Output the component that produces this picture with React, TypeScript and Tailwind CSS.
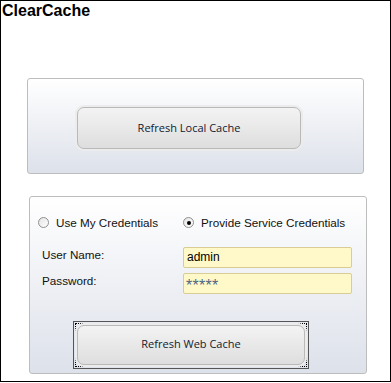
import React from 'react'

const sans = { fontFamily: '"Liberation Sans", Arial, sans-serif' }
const ui = { fontFamily: '"Open Sans", "Noto Sans", sans-serif' }

function Radio({ checked, label }: { checked?: boolean; label: string }) {
  return (
    <label className="flex items-center gap-[7px] text-[11.7px] text-[#111]" style={sans}>
      <span className="flex h-[11px] w-[11px] items-center justify-center rounded-full border border-[#8f8f8f] bg-gradient-to-br from-[#e4e4e4] to-white">
        {checked && <span className="h-[4px] w-[4px] rounded-full bg-black" />}
      </span>
      {label}
    </label>
  )
}

function CacheButton({ label }: { label: string }) {
  return (
    <div className="flex h-full w-full items-center justify-center rounded-[7px] border border-[#b9b9b9] bg-gradient-to-b from-[#f3f3f3] to-[#dedede] text-[11px] text-[#0f1a33] shadow-[0_0_0_2px_#ececec]" style={ui}>
      {label}
    </div>
  )
}

export default function App() {
  return (
    <div className="h-[382px] w-[391px] border border-black bg-white">
      <div className="h-[20px] pl-[1px] pt-[1px] text-[16px] font-bold leading-[18px] text-black" style={sans}>
        ClearCache
      </div>

      {/* local cache */}
      <div className="ml-[26px] mt-[57px] h-[96px] w-[337px] rounded-[3px] border border-[#bdbdbd] bg-gradient-to-b from-white to-[#dde1ea] pl-[49px] pt-[28px]">
        <div className="h-[42px] w-[224px]">
          <CacheButton label="Refresh Local Cache" />
        </div>
      </div>

      {/* web cache */}
      <div className="ml-[28px] mt-[22px] h-[178px] w-[338px] rounded-[3px] border border-[#bdbdbd] bg-gradient-to-b from-white to-[#dde1ea] pt-[17px]">
        <div className="flex pl-[8px]">
          <div className="w-[145px]">
            <Radio label="Use My Credentials" />
          </div>
          <Radio checked label="Provide Service Credentials" />
        </div>
        <div className="mt-[15px] flex flex-col gap-[5px] pl-[12px]">
          <div className="flex items-center">
            <span className="w-[141px] -translate-y-[2px] text-[11.7px] text-[#111]" style={sans}>User Name:</span>
            <div className="flex h-[21px] w-[169px] items-center rounded-[2px] border border-[#d7cd95] bg-[#fff9c9] pl-[3px] text-[12px] text-black" style={sans}>
              admin
            </div>
          </div>
          <div className="flex items-center">
            <span className="w-[141px] -translate-y-[2px] text-[11.7px] text-[#111]" style={sans}>Password:</span>
            <div className="flex h-[21px] w-[169px] items-center overflow-hidden rounded-[2px] border border-[#d7cd95] bg-[#fff9c9] pl-[2px] pt-[5px] text-[16px] leading-[16px] tracking-[0.3px] text-[#4f6685]" style={sans}>
              *****
            </div>
          </div>
        </div>
        <div className="ml-[43px] mt-[27px] h-[48px] w-[236px] border border-[#555] p-[1px]">
          <div className="h-full w-full border border-dotted border-black p-[1px]">
            <CacheButton label="Refresh Web Cache" />
          </div>
        </div>
      </div>
    </div>
  )
}
